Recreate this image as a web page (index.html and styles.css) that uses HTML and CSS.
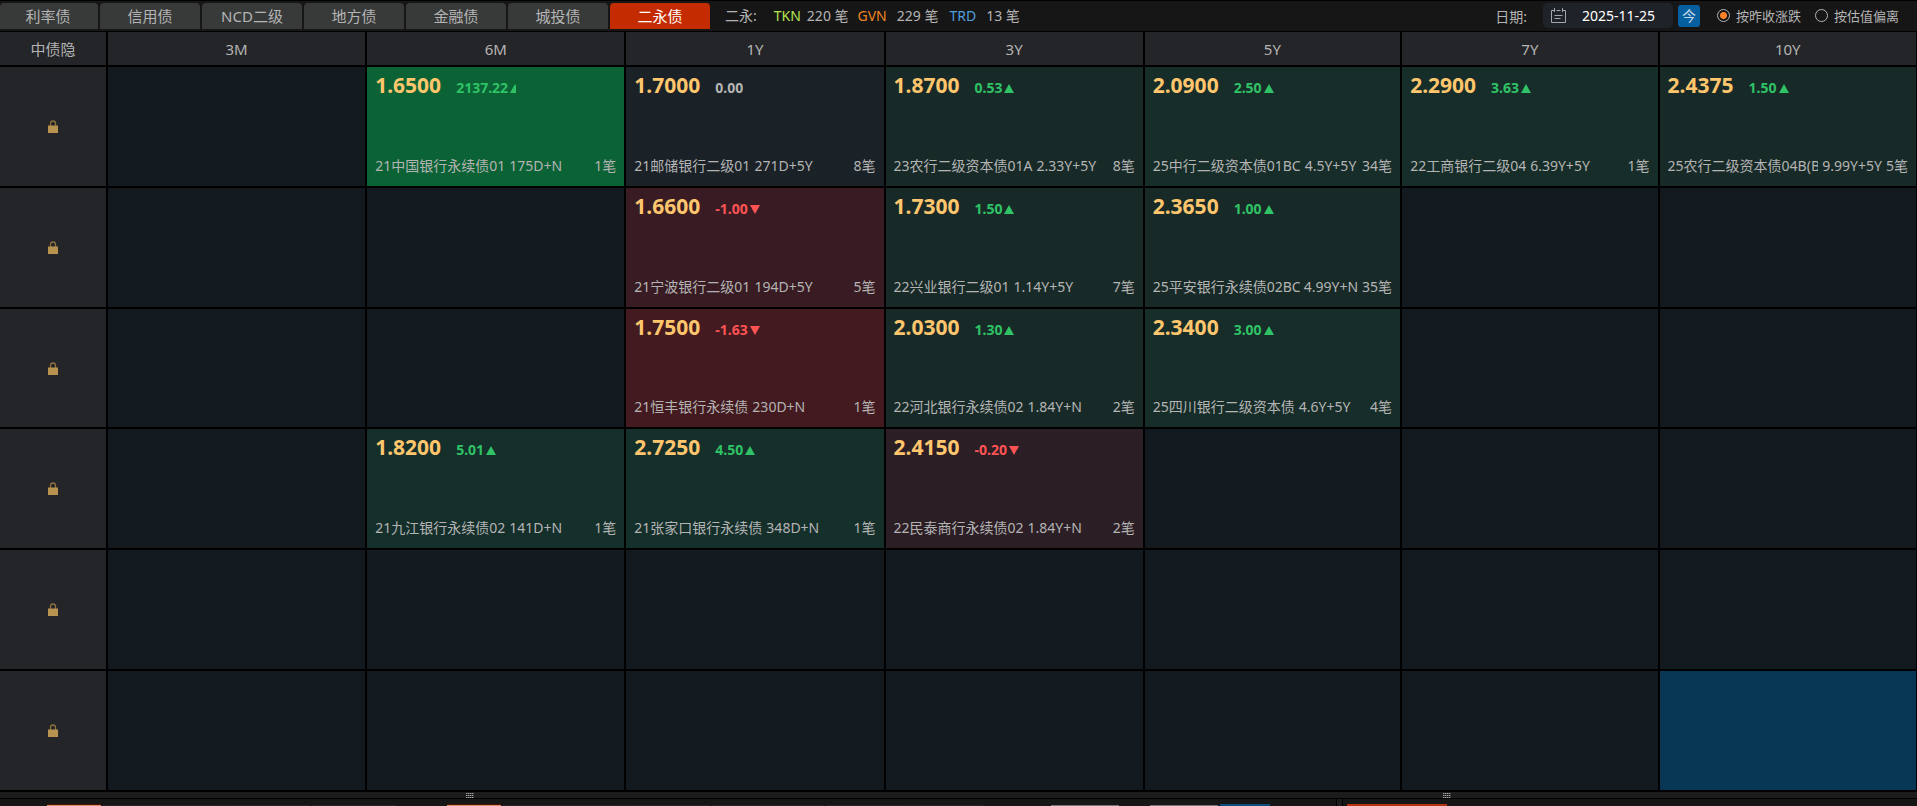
FILE: index.html
```html
<!DOCTYPE html>
<html lang="zh-CN">
<head>
<meta charset="UTF-8">
<meta name="viewport" content="width=device-width">
<title>二永债</title>
<link rel="stylesheet" href="styles.css">
</head>
<body>
<svg width="0" height="0" class="defs" aria-hidden="true">
  <symbol id="lock" viewBox="0 0 10 13">
    <path d="M2.5 6V3.5a2.5 2.5 0 0 1 5 0V6" fill="none" stroke="#8d7040" stroke-width="1.3"/>
    <rect x="0" y="5.5" width="10" height="7.5" fill="#b8924f"/>
  </symbol>
</svg>

<div class="toolbar">
  <nav class="tabs">
    <button class="tab">利率债</button>
    <button class="tab">信用债</button>
    <button class="tab">NCD二级</button>
    <button class="tab">地方债</button>
    <button class="tab">金融债</button>
    <button class="tab">城投债</button>
    <button class="tab active">二永债</button>
  </nav>
  <div class="summary">
    <span class="label">二永:</span>
    <span class="tkn">TKN</span><span class="num">220 笔</span>
    <span class="gvn">GVN</span><span class="num wide">229 笔</span>
    <span class="trd">TRD</span><span class="num wide">13 笔</span>
  </div>
  <div class="filters">
    <label for="date" class="date-label">日期:</label>
    <div class="date">
      <svg width="15" height="15" viewBox="0 0 15 15" fill="none" stroke="#a4a7aa" stroke-width="1">
        <path d="M3 2.5H.5v12h14v-12H12M5.500 2.500h4M3.500 0v4M11.500 0v4M3.500 7.500h8M3.500 10.500h6"/>
      </svg>
      <input type="text" id="date" value="2025-11-25">
    </div>
    <button class="today">今</button>
    <label class="radio"><input type="radio" name="mode" checked>按昨收涨跌</label>
    <label class="radio"><input type="radio" name="mode">按估值偏离</label>
  </div>
</div>

<main class="board">
<table>
  <colgroup>
    <col class="side"><col class="near"><col class="near"><col class="near"><col class="near"><col><col><col>
  </colgroup>
  <thead>
    <tr><th>中债隐</th><th>3M</th><th>6M</th><th>1Y</th><th>3Y</th><th>5Y</th><th>7Y</th><th>10Y</th></tr>
  </thead>
  <tbody>
    <tr>
      <th><svg class="lock"><use href="#lock"/></svg></th>
      <td></td>
      <td class="up-max"><div class="quote">
        <div class="top"><b class="price">1.6500</b><span class="chg up">2137.22</span></div>
        <div class="bottom"><span class="name">21中国银行永续债01</span><span class="term">175D+N</span><span class="count">1笔</span></div>
      </div></td>
      <td class="flat"><div class="quote">
        <div class="top"><b class="price">1.7000</b><span class="chg">0.00</span></div>
        <div class="bottom"><span class="name">21邮储银行二级01</span><span class="term">271D+5Y</span><span class="count">8笔</span></div>
      </div></td>
      <td class="up-1"><div class="quote">
        <div class="top"><b class="price">1.8700</b><span class="chg up">0.53</span></div>
        <div class="bottom"><span class="name">23农行二级资本债01A</span><span class="term">2.33Y+5Y</span><span class="count">8笔</span></div>
      </div></td>
      <td class="up-2"><div class="quote">
        <div class="top"><b class="price">2.0900</b><span class="chg up">2.50</span></div>
        <div class="bottom"><span class="name">25中行二级资本债01BC</span><span class="term">4.5Y+5Y</span><span class="count">34笔</span></div>
      </div></td>
      <td class="up-2"><div class="quote">
        <div class="top"><b class="price">2.2900</b><span class="chg up">3.63</span></div>
        <div class="bottom"><span class="name">22工商银行二级04</span><span class="term">6.39Y+5Y</span><span class="count">1笔</span></div>
      </div></td>
      <td class="up-1"><div class="quote">
        <div class="top"><b class="price">2.4375</b><span class="chg up">1.50</span></div>
        <div class="bottom"><span class="name">25农行二级资本债04B(BC</span><span class="term">9.99Y+5Y</span><span class="count">5笔</span></div>
      </div></td>
    </tr>
    <tr>
      <th><svg class="lock"><use href="#lock"/></svg></th>
      <td></td>
      <td></td>
      <td class="down-2"><div class="quote">
        <div class="top"><b class="price">1.6600</b><span class="chg down">-1.00</span></div>
        <div class="bottom"><span class="name">21宁波银行二级01</span><span class="term">194D+5Y</span><span class="count">5笔</span></div>
      </div></td>
      <td class="up-1"><div class="quote">
        <div class="top"><b class="price">1.7300</b><span class="chg up">1.50</span></div>
        <div class="bottom"><span class="name">22兴业银行二级01</span><span class="term">1.14Y+5Y</span><span class="count">7笔</span></div>
      </div></td>
      <td class="up-1"><div class="quote">
        <div class="top"><b class="price">2.3650</b><span class="chg up">1.00</span></div>
        <div class="bottom"><span class="name">25平安银行永续债02BC</span><span class="term">4.99Y+N</span><span class="count">35笔</span></div>
      </div></td>
      <td></td>
      <td></td>
    </tr>
    <tr>
      <th><svg class="lock"><use href="#lock"/></svg></th>
      <td></td>
      <td></td>
      <td class="down-3"><div class="quote">
        <div class="top"><b class="price">1.7500</b><span class="chg down">-1.63</span></div>
        <div class="bottom"><span class="name">21恒丰银行永续债</span><span class="term">230D+N</span><span class="count">1笔</span></div>
      </div></td>
      <td class="up-1"><div class="quote">
        <div class="top"><b class="price">2.0300</b><span class="chg up">1.30</span></div>
        <div class="bottom"><span class="name">22河北银行永续债02</span><span class="term">1.84Y+N</span><span class="count">2笔</span></div>
      </div></td>
      <td class="up-2"><div class="quote">
        <div class="top"><b class="price">2.3400</b><span class="chg up">3.00</span></div>
        <div class="bottom"><span class="name">25四川银行二级资本债</span><span class="term">4.6Y+5Y</span><span class="count">4笔</span></div>
      </div></td>
      <td></td>
      <td></td>
    </tr>
    <tr>
      <th><svg class="lock"><use href="#lock"/></svg></th>
      <td></td>
      <td class="up-3"><div class="quote">
        <div class="top"><b class="price">1.8200</b><span class="chg up">5.01</span></div>
        <div class="bottom"><span class="name">21九江银行永续债02</span><span class="term">141D+N</span><span class="count">1笔</span></div>
      </div></td>
      <td class="up-3"><div class="quote">
        <div class="top"><b class="price">2.7250</b><span class="chg up">4.50</span></div>
        <div class="bottom"><span class="name">21张家口银行永续债</span><span class="term">348D+N</span><span class="count">1笔</span></div>
      </div></td>
      <td class="down-1"><div class="quote">
        <div class="top"><b class="price">2.4150</b><span class="chg down">-0.20</span></div>
        <div class="bottom"><span class="name">22民泰商行永续债02</span><span class="term">1.84Y+N</span><span class="count">2笔</span></div>
      </div></td>
      <td></td>
      <td></td>
      <td></td>
    </tr>
    <tr>
      <th><svg class="lock"><use href="#lock"/></svg></th>
      <td></td><td></td><td></td><td></td><td></td><td></td><td></td>
    </tr>
    <tr>
      <th><svg class="lock"><use href="#lock"/></svg></th>
      <td></td><td></td><td></td><td></td><td></td><td></td><td class="selected"></td>
    </tr>
  </tbody>
</table>
</main>

<div class="splitter">
  <div class="pane-left"><span class="grip"></span></div>
  <div class="pane-right"><span class="grip"></span></div>
</div>

<!-- top edge of the lower panels -->
<div class="panels">
  <div class="panel list">
    <i class="chip hot"></i><i class="chip w120"></i><i class="chip w85"></i><i class="chip w85"></i>
    <i class="chip hot far"></i><i class="chip w120"></i><i class="chip w85"></i><i class="chip w55"></i><i class="chip w55"></i><i class="chip w85"></i><i class="chip w70"></i>
    <i class="chip field push"></i><i class="chip field mid"></i><i class="chip go"></i>
  </div>
  <div class="gutter"></div>
  <div class="panel detail"><i class="chip red"></i></div>
</div>
</body>
</html>
```

FILE: styles.css
```css
* {
  box-sizing: border-box;
}
body {
  margin: 0;
  height: 100vh;
  display: flex;
  flex-direction: column;
  overflow: hidden;
  background: #000;
  color: #b4b4b4;
  font-family: "Noto Sans", "Noto Sans CJK SC", sans-serif;
  font-size: 14px;
}
button, input {
  font-family: inherit;
  color: inherit;
  border: 0;
  margin: 0;
  padding: 0;
}
.defs {
  position: absolute;
}

/* toolbar */
.toolbar {
  display: flex;
  height: 30px;
  margin: 1px 0;
  background: #161616;
  flex: none;
}
.tabs {
  display: flex;
  gap: 2px;
  padding: 2px 0;
}
.tab {
  width: 100px;
  height: 26px;
  border-radius: 4px 4px 0 0;
  background: #383a3a;
  color: #b4b4b4;
  font-size: 15px;
  line-height: 26px;
}
.tab:first-child {
  width: 98px;
  padding-right: 2px;
}
.tab.active {
  background: #c42b00;
  color: #fff;
}
.summary {
  display: flex;
  align-items: center;
  margin-left: 15px;
  padding-bottom: 2px;
  white-space: nowrap;
}
.summary .label {
  margin-right: 17px;
}
.num {
  margin: 0 9px 0 6px;
}
.num.wide {
  margin: 0 11px 0 10px;
}
.tkn { color: #b5e550; }
.gvn { color: #ee8522; }
.trd { color: #4f9fdc; }

.filters {
  display: flex;
  align-items: center;
  margin-left: auto;
  padding-right: 18px;
  padding-bottom: 1px;
  font-size: 13px;
  white-space: nowrap;
}
.date-label {
  font-size: 14px;
}
.date {
  display: flex;
  align-items: center;
  gap: 16px;
  width: 130px;
  height: 25px;
  margin: 0 5px 0 16px;
  padding-left: 8px;
  border-radius: 5px;
  background: #1f2329;
}
.date input {
  width: 90px;
  background: none;
  color: #fff;
  font-size: 14px;
}
.today {
  width: 22px;
  height: 22px;
  margin-right: 3px;
  border-radius: 3px;
  background: #065f9f;
  color: #c8dcec;
  font-size: 14px;
  line-height: 22px;
}
.radio {
  display: flex;
  align-items: center;
  gap: 6px;
  margin-left: 14px;
}
.radio input {
  appearance: none;
  width: 13px;
  height: 13px;
  border: 1px solid #b4b4b4;
  border-radius: 50%;
}
.radio input:checked {
  background: radial-gradient(circle, #ff8227 0 3px, transparent 4px);
}

/* quote board */
.board {
  flex: 1;
  min-height: 0;
}
table {
  width: 100%;
  height: 100%;
  table-layout: fixed;
  border-collapse: separate;
  border-spacing: 0;
}
.side {
  width: 108px;
}
.near {
  width: 13.52%;
}
th, td {
  padding: 0;
  border: solid #000;
  border-width: 0 2px 2px 0;
}
th:last-child, td:last-child {
  border-right-width: 1px;
}
th {
  background: #242528;
  font-weight: normal;
  font-size: 15px;
}
thead th {
  height: 35px;
}
tbody th, td {
  height: 120px;
}
td {
  background: #121a20;
}
.lock {
  display: block;
  width: 10px;
  height: 13px;
  margin: 0 auto;
}
.flat { background: #1a2127; }
.up-1 { background: #182a28; }
.up-2 { background: #172d29; }
.up-3 { background: #152f2b; }
.up-max { background: #0a6235; }
.down-1 { background: #2c1e25; }
.down-2 { background: #391c23; }
.down-3 { background: #431a1f; }
.selected { background: #083756; }

.quote {
  display: flex;
  flex-direction: column;
  justify-content: space-between;
  height: 100%;
  padding: 4px 8px 10px;
}
.top, .bottom {
  display: flex;
  white-space: nowrap;
}
.top {
  align-items: baseline;
  line-height: 28px;
}
.price {
  color: #ffc66d;
  font-size: 21px;
}
.chg {
  max-width: 60px;
  margin-left: 15px;
  overflow: hidden;
  font-weight: bold;
}
.up { color: #2fc266; }
.down { color: #ff5353; }
.up::after, .down::after {
  content: "";
  display: inline-block;
  margin-left: 2px;
  border: solid transparent;
}
.up::after {
  border-width: 0 5px 9px;
  border-bottom-color: #2fc266;
}
.down::after {
  border-width: 9px 5px 0;
  border-top-color: #ff5353;
}
.bottom {
  line-height: 20px;
}
.name {
  overflow: hidden;
}
.term {
  margin: 0 4px;
}
.count {
  margin-left: auto;
}

/* splitter and lower panels */
.splitter {
  display: flex;
  justify-content: space-between;
  flex: none;
  height: 6px;
  background: #1c1c1c;
}
.pane-left, .pane-right {
  width: 49%;
}
.grip {
  display: block;
  width: 8px;
  height: 6px;
  margin: 0 auto;
  background: repeating-linear-gradient(#1c1c1c 0 1px, transparent 1px 2px), repeating-linear-gradient(90deg, #aaa 0 1px, #555 1px 2px);
}
.panels {
  display: flex;
  flex: none;
  height: 7px;
  margin-top: 1px;
}
.panel {
  display: flex;
  align-items: flex-end;
  background: #161616;
}
.list {
  flex: 1;
  gap: 2px;
  padding-left: 47px;
}
.gutter {
  width: 7px;
  background: #1c1c1c;
  border: solid #000;
  border-width: 0 1px;
}
.detail {
  width: 574px;
  padding-left: 4px;
}
.chip {
  flex: none;
  height: 1px;
  background: #262626;
}
.hot {
  width: 54px;
  height: 2px;
  background: #e08a66;
  border-top: 1px solid #4a1600;
}
.far { margin-left: 48px; }
.w120 { width: 120px; }
.w85 { width: 85px; }
.w70 { width: 70px; }
.w55 { width: 55px; }
.field {
  width: 68px;
  background: #777;
}
.push { margin-left: auto; }
.mid { margin-left: 29px; }
.go {
  width: 50px;
  height: 2px;
  margin-right: 66px;
  background: #0b4d7c;
}
.red {
  width: 100px;
  height: 2px;
  background: #b83210;
}
```
